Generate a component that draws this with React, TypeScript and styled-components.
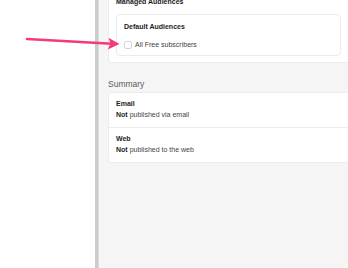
import styled, { createGlobalStyle } from "styled-components";

const GlobalStyle = createGlobalStyle`
  html, body {
    margin: 0;
    padding: 0;
    height: 100%;
    overflow: hidden;
    background: #ffffff;
  }
  #root {
    height: 100%;
  }
`;

const Page = styled.div`
  position: relative;
  display: flex;
  height: 268px;
  font-family: "Liberation Sans", Arial, sans-serif;
  color: #222;
`;

const Gutter = styled.div`
  width: 95px;
  flex-shrink: 0;
  background: #ffffff;
`;

const Divider = styled.div`
  width: 4px;
  flex-shrink: 0;
  background: #cbcbcb;
  border-right: 1px solid #dcdcdc;
  box-sizing: border-box;
`;

const Panel = styled.div`
  flex: 1;
  display: flex;
  flex-direction: column;
  padding-left: 9px;
  background: #f5f5f5;
  overflow: hidden;
`;

const Card = styled.div`
  margin-top: -14px;
  padding: 10px 7px 6px;
  background: #fff;
  border: 1px solid #ececec;
  border-right: none;
  border-radius: 0 0 0 4px;
`;

const Heading = styled.div<{ $gap?: number }>`
  font-size: 7px;
  line-height: 9px;
  font-weight: 700;
  color: #1d1d1d;
  margin-bottom: ${(p) => p.$gap ?? 0}px;
`;

const InnerCard = styled.div`
  padding: 7px 7px 6px;
  border: 1px solid #ebebeb;
  border-radius: 4px;
`;

const CheckRow = styled.label`
  display: flex;
  align-items: center;
  gap: 3px;
  margin-top: 9px;
  font-size: 7px;
  line-height: 9px;
  color: #444;
`;

const Box = styled.span`
  width: 8px;
  height: 8px;
  box-sizing: border-box;
  border: 1px solid #d4d4d4;
  border-radius: 2px;
  background: #fff;
`;

const SectionLabel = styled.div`
  margin-top: 16px;
  margin-bottom: 3px;
  font-size: 8.5px;
  line-height: 10px;
  color: #5c5c5c;
`;

const SummaryCard = styled.div`
  background: #fff;
  border: 1px solid #ececec;
  border-right: none;
  border-radius: 4px 0 0 4px;
`;

const SummaryRow = styled.div`
  display: flex;
  flex-direction: column;
  gap: 2px;
  padding: 6px 7px 8px;
  & + & {
    border-top: 1px solid #ededed;
  }
`;

const Detail = styled.div`
  font-size: 7px;
  line-height: 9px;
  color: #444;
  b {
    color: #1d1d1d;
  }
`;

const Pointer = styled.svg`
  position: absolute;
  left: 0;
  top: 0;
  pointer-events: none;
`;

const summary = [
  { title: "Email", text: "published via email" },
  { title: "Web", text: "published to the web" },
];

export default function App() {
  return (
    <>
      <GlobalStyle />
      <Page>
        <Gutter />
        <Divider />
        <Panel>
          <Card>
            <Heading $gap={8}>Managed Audiences</Heading>
            <InnerCard>
              <Heading>Default Audiences</Heading>
              <CheckRow>
                <Box />
                All Free subscribers
              </CheckRow>
            </InnerCard>
          </Card>
          <SectionLabel>Summary</SectionLabel>
          <SummaryCard>
            {summary.map((s) => (
              <SummaryRow key={s.title}>
                <Heading>{s.title}</Heading>
                <Detail>
                  <b>Not</b> {s.text}
                </Detail>
              </SummaryRow>
            ))}
          </SummaryCard>
        </Panel>
        <Pointer width="130" height="60" viewBox="0 0 130 60">
          <line x1="27" y1="39" x2="112" y2="43.7" stroke="#f43a77" strokeWidth="2.6" strokeLinecap="round" />
          <polygon points="119.5,44.1 108.5,37.8 110.5,43.5 107.8,49.6" fill="#f43a77" />
        </Pointer>
      </Page>
    </>
  );
}
